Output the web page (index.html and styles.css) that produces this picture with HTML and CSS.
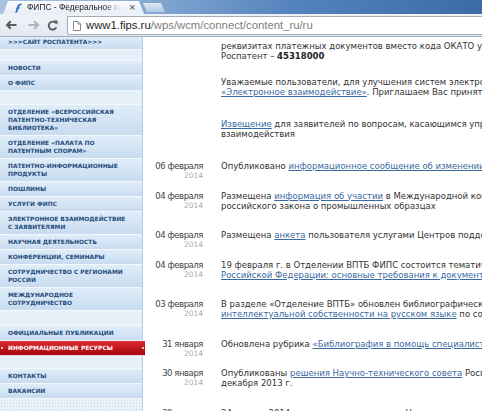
FILE: index.html
```html
<!DOCTYPE html>
<html lang="ru">
<head>
<meta charset="utf-8">
<title>ФИПС - Федеральное государственное бюджетное учреждение</title>
<link rel="stylesheet" href="styles.css">
</head>
<body>
<div class="window">
  <div class="tabbar">
    <div class="tab">
      <svg class="favicon" viewBox="0 0 9 10" aria-hidden="true">
        <path d="M2.2 9.6 L4.6 2.6 C5.1 1.2 6.2 0.4 8.8 0.4 L8.2 2.2 C7.2 2.2 6.6 2.5 6.3 3.4 L4.2 9.6 Z" fill="#2f6fc2"/>
        <path d="M3.6 4.4 H7.2 L6.8 5.6 H3.2 Z" fill="#2f6fc2"/>
      </svg>
      <span class="tab-title">ФИПС - Федеральное го</span>
      <span class="tab-close">×</span>
    </div>
    <div class="newtab"></div>
  </div>
  <div class="toolbar">
    <svg class="btn back" viewBox="0 0 12 10" aria-hidden="true">
      <path d="M11.5 5H2.2 M5.8 1.2L2 5l3.8 3.8" fill="none" stroke="#5b5b5b" stroke-width="2"/>
    </svg>
    <svg class="btn fwd" viewBox="0 0 12 10" aria-hidden="true">
      <path d="M0.5 5H9.8 M6.2 1.2L10 5l-3.8 3.8" fill="none" stroke="#b4b4b4" stroke-width="2"/>
    </svg>
    <svg class="btn reload" viewBox="0 0 11 11" aria-hidden="true">
      <path d="M8.9 3.2A4 4 0 1 0 9.3 7.4" fill="none" stroke="#5b5b5b" stroke-width="1.9"/>
      <path d="M6.3 0.6 L10.6 0.4 L10.4 4.7 Z" fill="#5b5b5b"/>
    </svg>
    <div class="omnibox">
      <svg class="page-icon" viewBox="0 0 8 10" aria-hidden="true">
        <path d="M0.5 0.5H5L7.5 3V9.5H0.5Z M5 0.5V3H7.5" fill="#fff" stroke="#8a8a8a" stroke-width="1"/>
      </svg>
      <span class="host">www1.fips.ru</span><span class="path">/wps/wcm/connect/content_ru/ru</span>
    </div>
  </div>
  <div class="page">
    <nav class="nav">
      <a class="item item-top">&gt;&gt;&gt;Сайт Роспатента&gt;&gt;&gt;</a>
      <div class="gap gap-11"></div>
      <a class="item">Новости</a>
      <a class="item">О ФИПС</a>
      <div class="gap gap-14"></div>
      <a class="item">Отделение «Всероссийская<br>патентно-техническая<br>библиотека»</a>
      <a class="item">Отделение «Палата по<br>патентным спорам»</a>
      <a class="item">Патентно-информационные<br>продукты</a>
      <a class="item">Пошлины</a>
      <a class="item">Услуги ФИПС</a>
      <a class="item">Электронное взаимодействие<br>с заявителями</a>
      <a class="item">Научная деятельность</a>
      <a class="item">Конференции, семинары</a>
      <a class="item">Сотрудничество с регионами<br>России</a>
      <a class="item">Международное<br>сотрудничество</a>
      <div class="gap gap-15"></div>
      <a class="item">Официальные публикации</a>
      <a class="item item-active">Информационные ресурсы</a>
      <div class="gap gap-13"></div>
      <a class="item">Контакты</a>
      <a class="item">Вакансии</a>
      <div class="nav-fill"></div>
    </nav>
    <main class="main">
      <div class="entry note note-first">
        <div class="date"></div>
        <p class="text">реквизитах платежных документов вместо кода ОКАТО указывать код ОКТМО, присвоенный<br>Роспатент – <b>45318000</b></p>
      </div>
      <div class="entry note">
        <div class="date"></div>
        <p class="text">Уважаемые пользователи, для улучшения систем электронного взаимодействия просим Вас<br><a class="link">«Электронное взаимодействие»</a>. Приглашаем Вас принять участие в опросе.</p>
      </div>
      <div class="entry note">
        <div class="date"></div>
        <p class="text"><a class="link">Извещение</a> для заявителей по вопросам, касающимся упрощения процедуры электронного<br>взаимодействия</p>
      </div>
      <div class="entry">
        <div class="date"><span class="day">06 февраля</span><span class="year">2014</span></div>
        <p class="text">Опубликовано <a class="link">информационное сообщение об изменении реквизитов</a></p>
      </div>
      <div class="entry">
        <div class="date"><span class="day">04 февраля</span><span class="year">2014</span></div>
        <p class="text">Размещена <a class="link">информация об участии</a> в Международной конференции по вопросам реформы<br>российского закона о промышленных образцах</p>
      </div>
      <div class="entry">
        <div class="date"><span class="day">04 февраля</span><span class="year">2014</span></div>
        <p class="text">Размещена <a class="link">анкета</a> пользователя услугами Центров поддержки технологий и инноваций</p>
      </div>
      <div class="entry">
        <div class="date"><span class="day">04 февраля</span><span class="year">2014</span></div>
        <p class="text">19 февраля г. в Отделении ВПТБ ФИПС состоится тематический семинар «Патентование в<br><a class="link">Российской Федерации: основные требования к документам заявки</a>»</p>
      </div>
      <div class="entry">
        <div class="date"><span class="day">03 февраля</span><span class="year">2014</span></div>
        <p class="text">В разделе «Отделение ВПТБ» обновлен библиографический указатель «Литература по<br><a class="link">интеллектуальной собственности на русском языке</a> по состоянию на 01.01.2014»</p>
      </div>
      <div class="entry">
        <div class="date"><span class="day">31 января</span><span class="year">2014</span></div>
        <p class="text">Обновлена рубрика <a class="link">«Библиография в помощь специалисту»</a></p>
      </div>
      <div class="entry">
        <div class="date"><span class="day">30 января</span><span class="year">2014</span></div>
        <p class="text">Опубликованы <a class="link">решения Научно-технического совета</a> Роспатента от 26<br>декабря 2013 г.</p>
      </div>
      <div class="entry">
        <div class="date"><span class="day">30 января</span><span class="year">2014</span></div>
        <p class="text">24 января 2014 г. состоялось заседание Научно-технического совета Роспатента</p>
      </div>
    </main>
  </div>
</div>
</body>
</html>
```

FILE: styles.css
```css
* { box-sizing: border-box; }
html, body { margin: 0; padding: 0; }
body {
  width: 482px;
  height: 411px;
  overflow: hidden;
  background: #fff;
  font-family: "DejaVu Sans", Verdana, sans-serif;
}
.window {
  width: 482px;
  height: 411px;
  overflow: hidden;
  display: flex;
  flex-direction: column;
}

/* ---------- tab strip ---------- */
.tabbar {
  height: 14px;
  flex: none;
  display: flex;
  align-items: flex-end;
  padding-left: 3px;
  background: linear-gradient(90deg, #a9c3df 0, #86a9d2 30%, #5583bd 60%, #3c6ba8 100%);
}
.tab {
  width: 141px;
  height: 13px;
  flex: none;
  display: flex;
  align-items: center;
  padding: 0 8px 0 10px;
  background: linear-gradient(#fbfcfe, #e7eef6);
  clip-path: polygon(5px 0, calc(100% - 5px) 0, 100% 100%, 0 100%);
}
.favicon { width: 9px; height: 10px; flex: none; }
.tab-title {
  width: 94px;
  flex: none;
  margin-left: 5px;
  font: 8.4px/13px "Liberation Sans", Arial, sans-serif;
  color: #1a1a1a;
  white-space: nowrap;
  overflow: hidden;
  -webkit-mask-image: linear-gradient(90deg, #000 82%, transparent);
  mask-image: linear-gradient(90deg, #000 82%, transparent);
}
.tab-close {
  flex: none;
  margin-left: auto;
  font: 9px/13px "DejaVu Sans", sans-serif;
  color: #4a4a4a;
}
.newtab {
  width: 22px;
  height: 9px;
  flex: none;
  margin: 0 0 2px -1px;
  background: linear-gradient(#e0eaf5, #b3c8e1);
  clip-path: polygon(0 0, calc(100% - 4px) 0, 100% 100%, 4px 100%);
}

/* ---------- toolbar ---------- */
.toolbar {
  height: 23px;
  flex: none;
  display: flex;
  align-items: center;
  padding-left: 5px;
  background: linear-gradient(#eef3f9, #e3e9f1);
  border-bottom: 1px solid #a2adbb;
}
.btn { flex: none; }
.back { width: 12px; height: 10px; margin-right: 11px; }
.fwd { width: 12px; height: 10px; margin-right: 7px; }
.reload { width: 11px; height: 11px; margin-right: 9px; }
.omnibox {
  flex: none;
  width: 430px;
  height: 19px;
  margin-top: 1px;
  display: flex;
  align-items: center;
  padding-left: 5px;
  background: #fff;
  border: 1px solid #a3adba;
  border-right: 0;
  border-radius: 2px 0 0 2px;
  font: 11.3px/17px "Liberation Sans", Arial, sans-serif;
  white-space: nowrap;
}
.page-icon { width: 8px; height: 10px; flex: none; margin-right: 5px; }
.host { color: #1e1e1e; }
.path { color: #7d7d7d; }

/* ---------- page ---------- */
.page {
  flex: 1;
  min-height: 0;
  display: flex;
}
.nav {
  width: 143px;
  flex: none;
  display: flex;
  flex-direction: column;
  background: #e4eef8;
  border-right: 1px solid #b3cbe3;
}
.item {
  display: block;
  flex: none;
  padding: 4px 2px 2px 8px;
  font: bold 5.9px/8px "DejaVu Sans", Verdana, sans-serif;
  text-rendering: geometricPrecision;
  color: #1f4b7b;
  text-transform: uppercase;
  white-space: nowrap;
  overflow: hidden;
  text-decoration: none;
  background: linear-gradient(#e0edf9, #c8dcf0);
  border-bottom: 1px solid #f3f8fd;
}
.item-top { padding-top: 2px; }
.item-active {
  position: relative;
  margin-right: -3px;
  color: #fff;
  background: linear-gradient(#de2a30, #a3070e);
  border-bottom-color: #f1d6d7;
}
.item-active::before,
.item-active::after {
  content: "";
  position: absolute;
  top: 6px;
  width: 2px;
  height: 2px;
  border-radius: 50%;
  background: #fff;
}
.item-active::before { left: 1px; }
.item-active::after { right: 1px; }
.gap {
  flex: none;
  background: #e6f0f9;
  border-bottom: 1px solid #f3f8fd;
}
.gap-11 { height: 11px; }
.gap-13 { height: 13px; }
.gap-14 { height: 14px; }
.gap-15 { height: 15px; }
.nav-fill {
  flex: 1;
  background-color: #e9f1f9;
  background-image: radial-gradient(circle, #c9d9ea 0.8px, transparent 1px);
  background-size: 3px 3px;
}

.main {
  flex: 1;
  min-width: 0;
  overflow: hidden;
  padding-top: 4px;
  background: #fff;
  font-size: 8.5px;
  line-height: 10px;
  color: #333;
}
.entry {
  display: grid;
  grid-template-columns: 60px max-content;
  column-gap: 18px;
  align-items: start;
}
.date {
  text-align: right;
  white-space: nowrap;
  color: #444;
}
.day, .year { display: block; }
.day { letter-spacing: -0.45px; }
.year { color: #aaa; font-size: 7.5px; }
.text {
  margin: 0;
  white-space: nowrap;
  padding-bottom: 19.5px;
}
.note .text { padding-bottom: 22px; }
.note-first .text { padding-bottom: 16px; }
.text b { color: #222; }
.link {
  color: #3a6aa2;
  text-decoration: underline;
}
```
